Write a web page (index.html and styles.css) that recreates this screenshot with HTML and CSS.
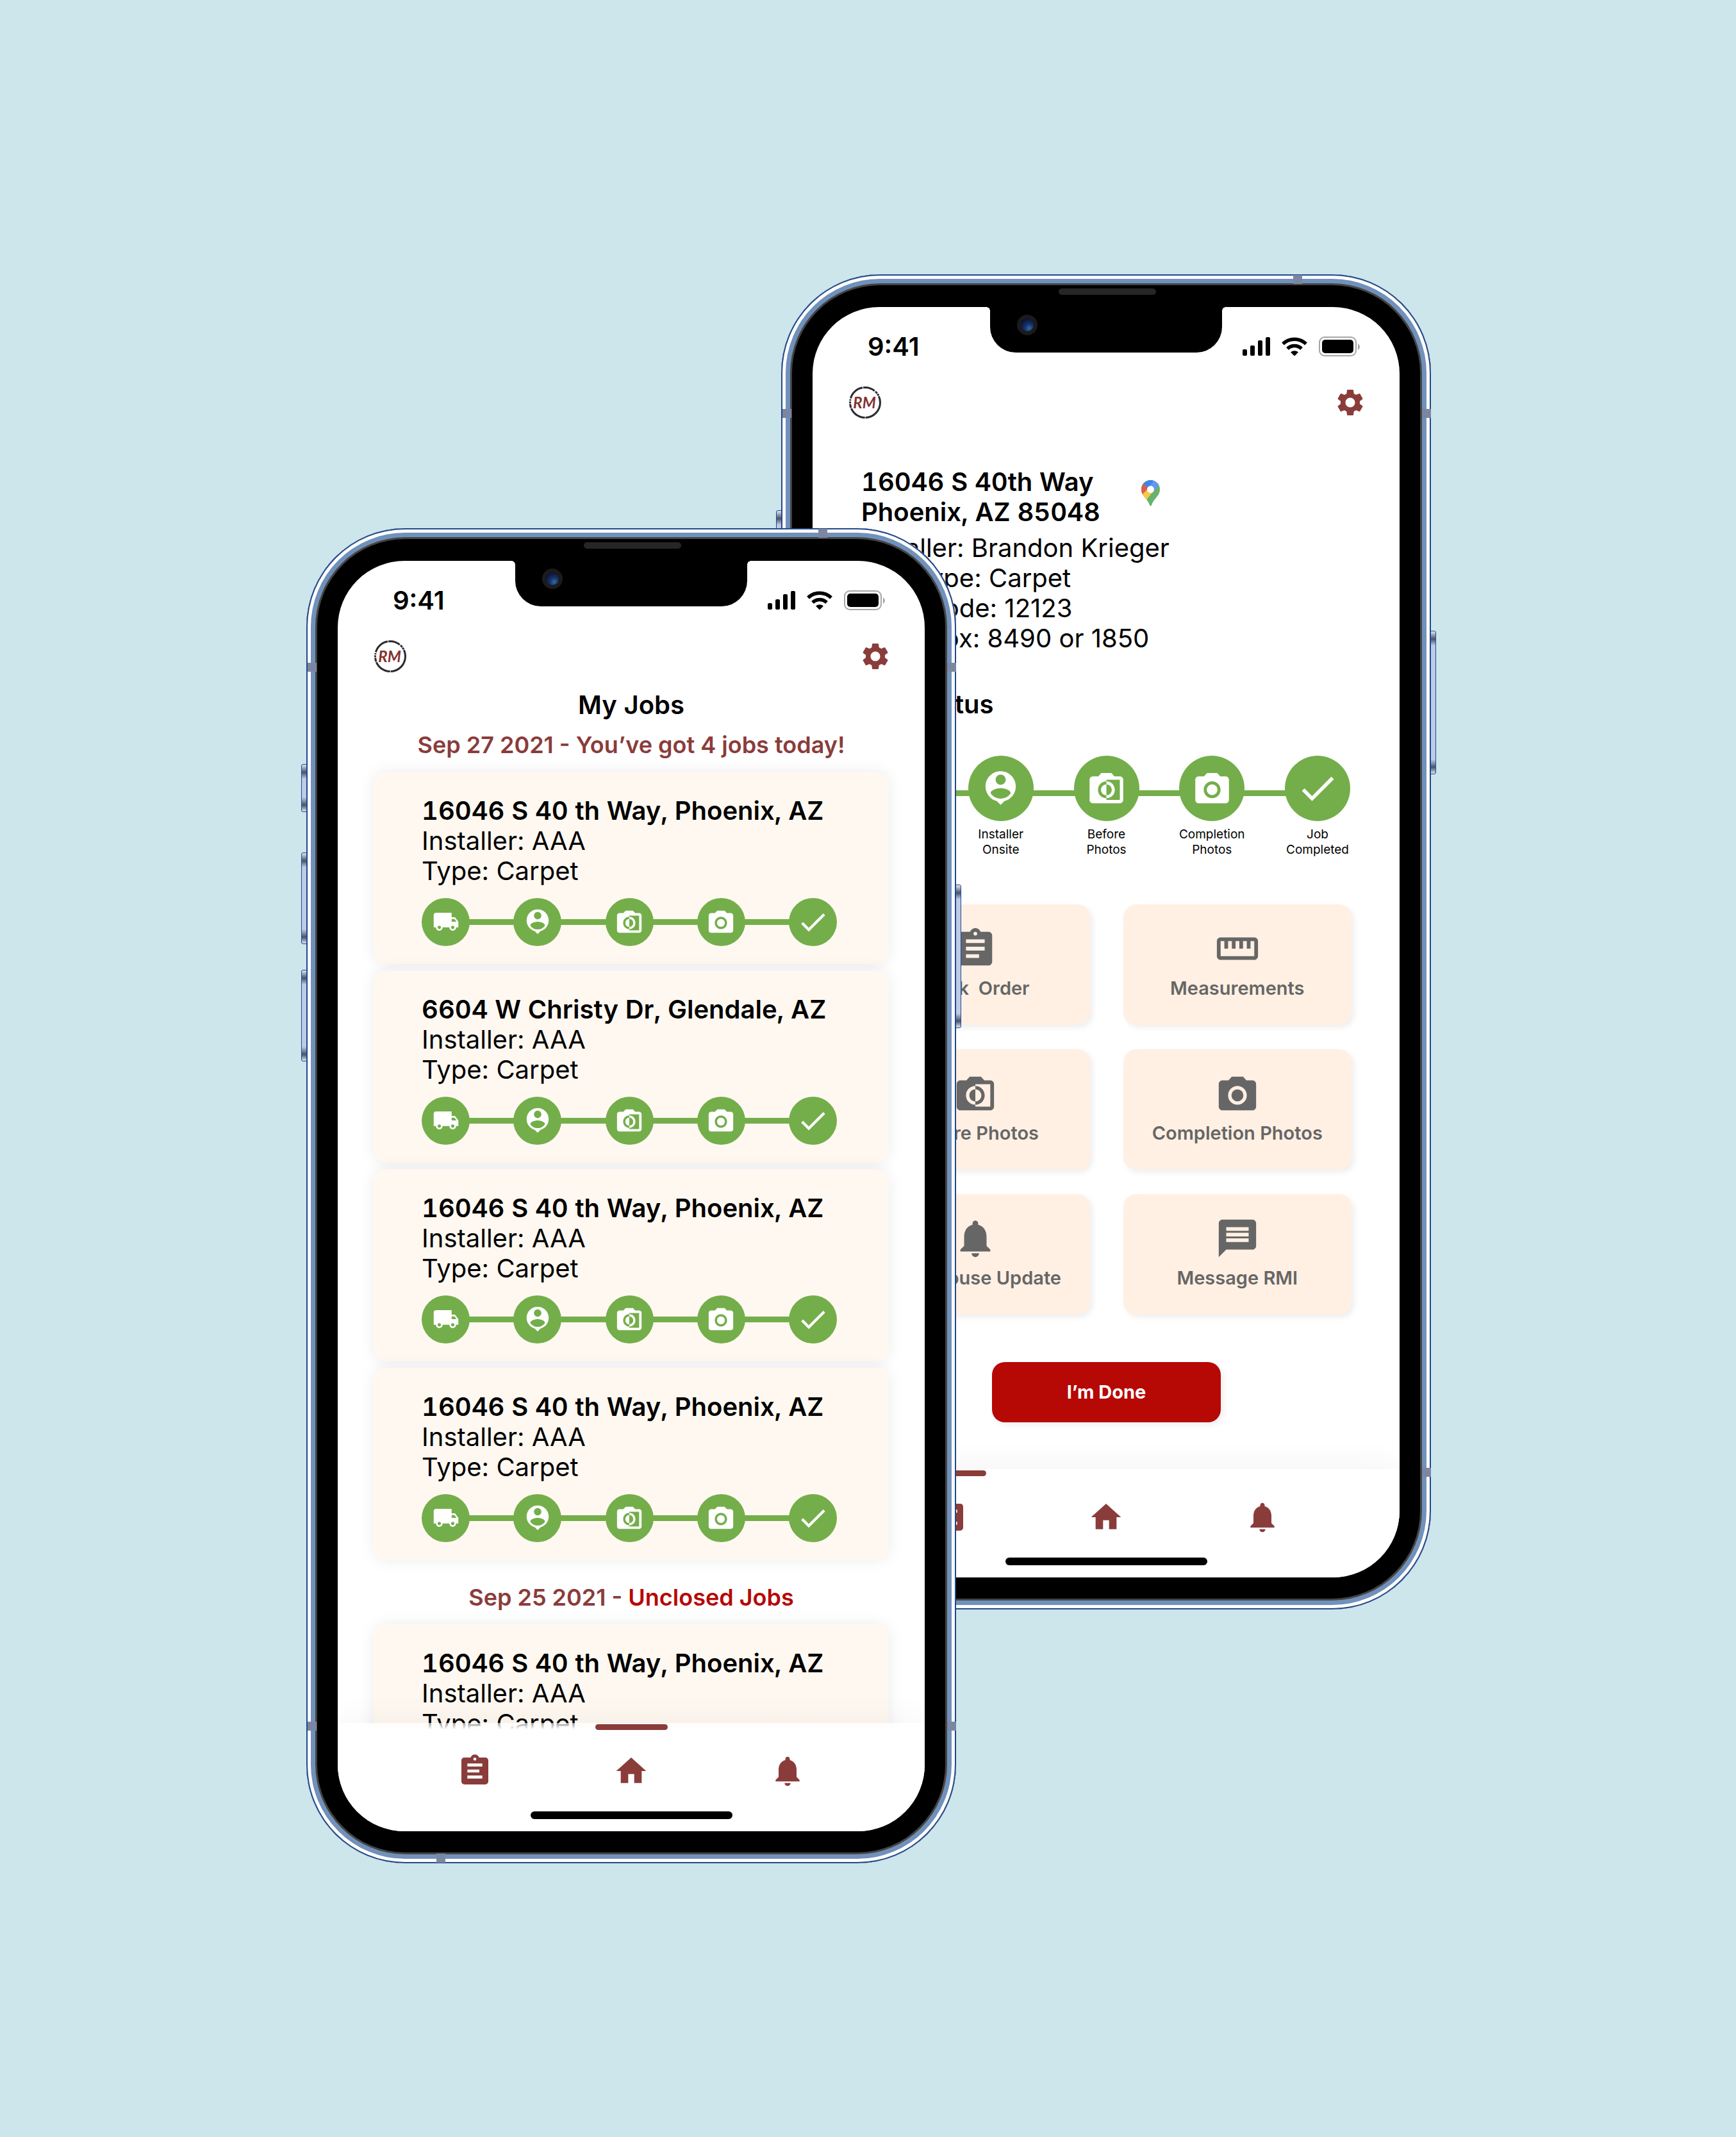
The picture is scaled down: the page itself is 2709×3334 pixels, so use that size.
FILE: index.html
```html
<!DOCTYPE html>
<html lang="en">
<head>
<meta charset="utf-8">
<meta name="viewport" content="width=device-width, initial-scale=1">
<title>RM Installer App</title>
<link rel="stylesheet" href="styles.css">
</head>
<body>
<svg class="sprite" aria-hidden="true">
  <symbol id="truck" viewBox="0 0 24 24"><path d="M20 8h-3V4H3c-1.1 0-2 .9-2 2v11h2c0 1.66 1.34 3 3 3s3-1.34 3-3h6c0 1.66 1.34 3 3 3s3-1.34 3-3h2v-5l-3-4zM6 18.500c-.83 0-1.500-.67-1.500-1.500s.67-1.500 1.500-1.500 1.500.67 1.500 1.500-.67 1.500-1.500 1.500zm13.500-9l1.960 2.500H17V9.500h2.500zm-1.500 9c-.83 0-1.500-.67-1.500-1.500s.67-1.500 1.500-1.500 1.500.67 1.500 1.500-.67 1.500-1.500 1.500z"/></symbol>
  <symbol id="onsite" viewBox="0 0 24 24"><path d="M12 2c-4.970 0-9 4.030-9 9 0 4.170 2.840 7.670 6.690 8.690L12 22l2.310-2.310C18.160 18.670 21 15.170 21 11c0-4.970-4.030-9-9-9zm0 2c1.660 0 3 1.340 3 3s-1.340 3-3 3-3-1.340-3-3 1.340-3 3-3zm0 14.300c-2.500 0-4.710-1.280-6-3.220.03-1.990 4-3.080 6-3.080 1.990 0 5.970 1.090 6 3.080-1.290 1.940-3.500 3.220-6 3.220z"/></symbol>
  <symbol id="before" viewBox="0 0 24 24"><path d="M20 5h-3.200L15 3H9L7.200 5H4c-1.100 0-2 .9-2 2v12c0 1.100.9 2 2 2h16c1.100 0 2-.9 2-2V7c0-1.100-.9-2-2-2zm0 14h-8v-1c-2.800 0-5-2.200-5-5s2.200-5 5-5V7h8v12zm-3-6c0-2.800-2.200-5-5-5v1.800c1.800 0 3.200 1.400 3.200 3.200s-1.400 3.200-3.200 3.200V18c2.800 0 5-2.200 5-5zm-8.200 0c0 1.800 1.400 3.200 3.200 3.200V9.800c-1.800 0-3.200 1.400-3.200 3.200z"/></symbol>
  <symbol id="camera" viewBox="0 -1 24 24"><circle cx="12" cy="12" r="3.200"/><path d="M9 2L7.170 4H4c-1.100 0-2 .9-2 2v12c0 1.100.9 2 2 2h16c1.100 0 2-.9 2-2V6c0-1.100-.9-2-2-2h-3.170L15 2H9zm3 15c-2.760 0-5-2.240-5-5s2.240-5 5-5 5 2.240 5 5-2.240 5-5 5z"/></symbol>
  <symbol id="check" viewBox="0 0 24 24"><path d="M9 16.200L4.800 12l-1.400 1.400L9 19 21 7l-1.400-1.400L9 16.200z"/></symbol>
  <symbol id="order" viewBox="0 0 24 24"><path d="M19 3h-4.180C14.400 1.840 13.300 1 12 1c-1.300 0-2.400.84-2.820 2H5c-1.100 0-2 .9-2 2v14c0 1.100.9 2 2 2h14c1.100 0 2-.9 2-2V5c0-1.100-.9-2-2-2zm-7 0c.55 0 1 .45 1 1s-.45 1-1 1-1-.45-1-1 .45-1 1-1zm2 14H7v-2h7v2zm3-4H7v-2h10v2zm0-4H7V7h10v2z"/></symbol>
  <symbol id="jobs" viewBox="0 0 24 24"><path d="M19 3h-4.180C14.400 1.840 13.300 1 12 1c-1.300 0-2.400.84-2.820 2H5c-1.100 0-2 .9-2 2v14c0 1.100.9 2 2 2h14c1.100 0 2-.9 2-2V5c0-1.100-.9-2-2-2zm-7 0c.55 0 1 .45 1 1s-.45 1-1 1-1-.45-1-1 .45-1 1-1zm5 14H7v-2h10v2zm-2-4H7v-2h8v2zm2-4H7V7h10v2z"/></symbol>
  <symbol id="home" viewBox="0 0 24 24"><path d="M10 20v-6h4v6h5v-8h3L12 3 2 12h3v8z"/></symbol>
  <symbol id="bell" viewBox="0 0 24 24"><path d="M12 22c1.100 0 2-.9 2-2h-4c0 1.100.89 2 2 2zm6-6v-5c0-3.070-1.640-5.640-4.500-6.320V4c0-.83-.67-1.500-1.500-1.500s-1.500.67-1.500 1.500v.68C7.630 5.360 6 7.920 6 11v5l-2 2v1h16v-1l-2-2z"/></symbol>
  <symbol id="ruler" viewBox="0 0 24 24"><path d="M21 6H3c-1.100 0-2 .9-2 2v8c0 1.100.9 2 2 2h18c1.100 0 2-.9 2-2V8c0-1.100-.9-2-2-2zm0 10H3V8h2v4h2V8h2v4h2V8h2v4h2V8h2v4h2V8h2v8z"/></symbol>
  <symbol id="message" viewBox="0 0 24 24"><path d="M20 2H4c-1.100 0-1.990.9-1.990 2L2 22l4-4h14c1.100 0 2-.9 2-2V4c0-1.100-.9-2-2-2zM6 6h12v2H6V6zm0 3h12v2H6V9zm0 3h12v2H6v-2z"/></symbol>
  <symbol id="gear" viewBox="0 0 24 24"><path d="M19.140 12.940c.04-.3.060-.61.060-.94 0-.32-.02-.64-.07-.94l2.030-1.580c.18-.14.23-.41.12-.61l-1.920-3.320c-.12-.22-.37-.29-.59-.22l-2.390.96c-.5-.38-1.030-.7-1.620-.94l-.36-2.540c-.04-.24-.24-.41-.48-.41h-3.840c-.24 0-.43.17-.47.41l-.36 2.540c-.59.24-1.130.57-1.620.94l-2.390-.96c-.22-.08-.47 0-.59.22L2.740 8.870c-.12.21-.08.47.12.61l2.030 1.580c-.05.3-.09.63-.09.94s.02.64.07.94l-2.030 1.580c-.18.14-.23.41-.12.61l1.920 3.320c.12.22.37.29.59.22l2.390-.96c.5.38 1.030.7 1.620.94l.36 2.540c.05.24.24.41.48.41h3.840c.24 0 .44-.17.47-.41l.36-2.540c.59-.24 1.130-.56 1.620-.94l2.390.96c.22.08.47 0 .59-.22l1.920-3.320c.12-.22.07-.47-.12-.61l-2.010-1.580zM12 15.600c-1.980 0-3.600-1.620-3.600-3.600s1.620-3.600 3.600-3.600 3.600 1.620 3.600 3.600-1.620 3.600-3.600 3.600z"/></symbol>
  <symbol id="signal" viewBox="0 0 43 29"><rect y="19" width="7" height="10" rx="2"/><rect x="12" y="13" width="7" height="16" rx="2"/><rect x="24" y="5" width="7" height="24" rx="2"/><rect x="36" width="7" height="29" rx="2"/></symbol>
  <symbol id="wifi" viewBox="0 0 40 29"><g fill="none" stroke="currentColor" stroke-width="5.500"><path d="M2 10.500a26 26 0 0 1 36 0"/><path d="M9 18a16 16 0 0 1 22 0"/></g><path d="M14 23.500a9 9 0 0 1 12 0L20 29.500z"/></symbol>
  <symbol id="battery" viewBox="0 0 64 31"><rect x="1" y="1" width="57" height="29" rx="8" fill="none" stroke="#a6a6a6" stroke-width="2"/><path d="M61 11v10q3-2 3-5t-3-5z" fill="#a6a6a6"/><rect x="5" y="5" width="49" height="21" rx="5"/></symbol>
  <symbol id="logo" viewBox="0 0 50 52"><circle cx="25" cy="26" r="23.500" fill="none" stroke="#2b2b30" stroke-width="3" stroke-dasharray="36 1 27 1 6 1 3 1.500 2 1.500 26 1 19 1.500 4 1 3 1"/><text class="logo-text" x="24" y="35" text-anchor="middle">RM</text></symbol>
  <symbol id="pin" viewBox="0 0 29 41">
    <clipPath id="pin-shape"><path d="M14.500 0C6.500 0 0 6.400 0 14.500c0 5 2 8.500 5 12 4 5 6.500 7.500 8 12.500.5 1.800 2.500 1.800 3 0 1.500-5 4-7.500 8-12.500 3-3.500 5-7 5-12C29 6.400 22.500 0 14.500 0z"/></clipPath>
    <g clip-path="url(#pin-shape)"><path fill="#68b26c" d="M0 0h29v41H0z"/><path fill="#f6c846" d="M0 22l10-10 10 4L7 32H0z"/><path fill="#dd5d4c" d="M0 5h4l8 7L0 24z"/><path fill="#4285e8" d="M2 5l5-5h14L11 13z"/><path fill="#6496f2" d="M20 0h9v6L18 19l-8-6z"/></g>
    <circle cx="14.500" cy="14.500" r="5.500" fill="#fff"/>
  </symbol>
</svg>

<main class="mockup">
  <section class="phone phone-back" aria-label="Job details">
    <span class="key key-mute"></span><span class="key key-up"></span><span class="key key-down"></span><span class="key key-power"></span>
    <span class="band band-top"></span><span class="band band-bottom"></span>
    <span class="band band-left band-high"></span><span class="band band-left band-low"></span>
    <span class="band band-right band-high"></span><span class="band band-right band-low"></span>
    <span class="speaker"></span>
    <div class="screen">
      <div class="notch"><span class="lens"></span></div>
      <div class="status-bar"><span>9:41</span>
        <div class="status-icons"><svg class="signal"><use href="#signal"/></svg><svg class="wifi"><use href="#wifi"/></svg><svg class="battery"><use href="#battery"/></svg></div>
      </div>
      <header class="app-bar"><svg class="logo" role="img" aria-label="RM"><use href="#logo"/></svg><button class="settings" aria-label="Settings"><svg><use href="#gear"/></svg></button></header>
      <div class="details">
        <div class="address"><h1>16046 S 40th Way<br>Phoenix, AZ 85048</h1><a class="map-link" href="#map" aria-label="Open map"><svg><use href="#pin"/></svg></a></div>
        <p class="facts">Installer: Brandon Krieger<br>Job Type: Carpet<br>Gate Code: 12123<br>Lock Box: 8490 or 1850</p>
        <h2>Job Status</h2>
        <ol class="steps steps-large">
          <li><span class="dot"><svg><use href="#truck"/></svg></span><span>Installer<br>En Route</span></li>
          <li><span class="dot"><svg><use href="#onsite"/></svg></span><span>Installer<br>Onsite</span></li>
          <li><span class="dot"><svg><use href="#before"/></svg></span><span>Before<br>Photos</span></li>
          <li><span class="dot"><svg><use href="#camera"/></svg></span><span>Completion<br>Photos</span></li>
          <li><span class="dot dot-check"><svg><use href="#check"/></svg></span><span>Job<br>Completed</span></li>
        </ol>
        <div class="tiles">
          <button class="tile"><svg><use href="#order"/></svg>Work&nbsp; Order</button>
          <button class="tile"><svg><use href="#ruler"/></svg>Measurements</button>
          <button class="tile"><svg><use href="#before"/></svg>Before Photos</button>
          <button class="tile"><svg><use href="#camera"/></svg>Completion Photos</button>
          <button class="tile"><svg><use href="#bell"/></svg>Warehouse Update</button>
          <button class="tile"><svg><use href="#message"/></svg>Message RMI</button>
        </div>
        <button class="done">I’m Done</button>
      </div>
      <nav class="tab-bar">
        <div class="tabs"><a class="active" href="#jobs-list" aria-label="Jobs"><svg><use href="#jobs"/></svg></a><a href="#start" aria-label="Home"><svg><use href="#home"/></svg></a><a href="#alerts" aria-label="Alerts"><svg><use href="#bell"/></svg></a></div>
        <span class="home-indicator"></span>
      </nav>
    </div>
  </section>

  <section class="phone phone-front" aria-label="My jobs">
    <span class="key key-mute"></span><span class="key key-up"></span><span class="key key-down"></span><span class="key key-power"></span>
    <span class="band band-top"></span><span class="band band-bottom"></span>
    <span class="band band-left band-high"></span><span class="band band-left band-low"></span>
    <span class="band band-right band-high"></span><span class="band band-right band-low"></span>
    <span class="speaker"></span>
    <div class="screen">
      <div class="notch"><span class="lens"></span></div>
      <div class="status-bar"><span>9:41</span>
        <div class="status-icons"><svg class="signal"><use href="#signal"/></svg><svg class="wifi"><use href="#wifi"/></svg><svg class="battery"><use href="#battery"/></svg></div>
      </div>
      <header class="app-bar"><svg class="logo" role="img" aria-label="RM"><use href="#logo"/></svg><button class="settings" aria-label="Settings"><svg><use href="#gear"/></svg></button></header>
      <div class="jobs">
        <h1>My Jobs</h1>
        <h2 class="day">Sep 27 2021 - You’ve got 4 jobs today!</h2>
        <div class="cards">
          <article class="card"><h3>16046 S 40 th Way, Phoenix, AZ</h3><p>Installer: AAA<br>Type: Carpet</p>
            <ol class="steps"><li class="dot"><svg class="truck"><use href="#truck"/></svg></li><li class="dot"><svg><use href="#onsite"/></svg></li><li class="dot"><svg><use href="#before"/></svg></li><li class="dot"><svg><use href="#camera"/></svg></li><li class="dot dot-check"><svg><use href="#check"/></svg></li></ol></article>
          <article class="card"><h3>6604 W Christy Dr, Glendale, AZ</h3><p>Installer: AAA<br>Type: Carpet</p>
            <ol class="steps"><li class="dot"><svg class="truck"><use href="#truck"/></svg></li><li class="dot"><svg><use href="#onsite"/></svg></li><li class="dot"><svg><use href="#before"/></svg></li><li class="dot"><svg><use href="#camera"/></svg></li><li class="dot dot-check"><svg><use href="#check"/></svg></li></ol></article>
          <article class="card"><h3>16046 S 40 th Way, Phoenix, AZ</h3><p>Installer: AAA<br>Type: Carpet</p>
            <ol class="steps"><li class="dot"><svg class="truck"><use href="#truck"/></svg></li><li class="dot"><svg><use href="#onsite"/></svg></li><li class="dot"><svg><use href="#before"/></svg></li><li class="dot"><svg><use href="#camera"/></svg></li><li class="dot dot-check"><svg><use href="#check"/></svg></li></ol></article>
          <article class="card"><h3>16046 S 40 th Way, Phoenix, AZ</h3><p>Installer: AAA<br>Type: Carpet</p>
            <ol class="steps"><li class="dot"><svg class="truck"><use href="#truck"/></svg></li><li class="dot"><svg><use href="#onsite"/></svg></li><li class="dot"><svg><use href="#before"/></svg></li><li class="dot"><svg><use href="#camera"/></svg></li><li class="dot dot-check"><svg><use href="#check"/></svg></li></ol></article>
        </div>
        <h2 class="day day-unclosed">Sep 25 2021 - <em>Unclosed Jobs</em></h2>
        <div class="cards">
          <article class="card"><h3>16046 S 40 th Way, Phoenix, AZ</h3><p>Installer: AAA<br>Type: Carpet</p></article>
        </div>
      </div>
      <nav class="tab-bar">
        <div class="tabs"><a href="#jobs-list" aria-label="Jobs"><svg><use href="#jobs"/></svg></a><a class="active" href="#start" aria-label="Home"><svg><use href="#home"/></svg></a><a href="#alerts" aria-label="Alerts"><svg><use href="#bell"/></svg></a></div>
        <span class="home-indicator"></span>
      </nav>
    </div>
  </section>
</main>
</body>
</html>
```

FILE: styles.css
```css
:root {
  --maroon: #8a3c3b;
  --red: #b60805;
  --green: #74ae4a;
  --rim: #7091bb;
  --navy: #23488a;
}

* { box-sizing: border-box; }

body {
  margin: 0;
  min-height: 100vh;
  padding-left: 2px;
  display: flex;
  align-items: center;
  justify-content: center;
  background: #cce6ec;
  color: #000;
  font: 400 40px/47px Inter, "Liberation Sans", sans-serif;
}

h1, h2, h3, p, ol { margin: 0; padding: 0; }
h1, h2, h3 { font-size: 40px; font-weight: 600; }
h1, h3 { font-variant-numeric: tabular-nums; }
ol { list-style: none; }
button { border: 0; padding: 0; background: none; font: inherit; color: inherit; cursor: pointer; }
a { color: inherit; }
svg { display: block; fill: currentColor; }
.sprite { position: absolute; width: 0; height: 0; }

/* Two overlapping devices share the middle column */
.mockup {
  width: 100%;
  max-width: 1755px;
  display: grid;
  grid-template-columns: 741fr 273fr 741fr;
}

.phone {
  position: relative;
  grid-row: 1;
  min-width: 0;
  padding: 51px 49px 50px;
  display: flex;
  border-radius: 154px;
  background: #000;
  box-shadow: inset 0 0 0 2px var(--navy), inset 0 0 0 7px #fff, inset 0 0 0 14px var(--rim), inset 0 0 0 17px #444;
}
.phone-back { grid-column: 2 / 4; aspect-ratio: 1014 / 2083; align-self: start; }
.phone-front { grid-column: 1 / 3; aspect-ratio: 1014 / 2083; margin-top: 396px; }

/* Hardware details on the rim */
.key {
  position: absolute;
  left: -8px;
  width: 9px;
  border: 1px solid var(--navy);
  border-radius: 3px 0 0 3px;
  background: linear-gradient(#dfe6f4, #46536b 12px, #bccbe8 22px, #bccbe8 calc(100% - 22px), #46536b calc(100% - 10px), #dfe6f4);
}
.key-mute { top: 368px; height: 75px; }
.key-up { top: 506px; height: 143px; }
.key-down { top: 689px; height: 143px; }
.key-power { top: 556px; height: 224px; left: auto; right: -8px; border-radius: 0 3px 3px 0; }
.band { position: absolute; width: 14px; height: 14px; background: #7b86a3; }
.band-top { top: 1px; right: 201px; }
.band-bottom { bottom: 1px; left: 203px; }
.band-left { left: 2px; }
.band-right { right: 0; }
.band-high { top: 210px; }
.band-low { bottom: 207px; }
.speaker { position: absolute; top: 22px; left: 50%; width: 152px; height: 10px; margin-left: -74px; border-radius: 5px; background: #262626; }

.screen {
  position: relative;
  flex: 1;
  min-width: 0;
  display: flex;
  flex-direction: column;
  overflow: hidden;
  border-radius: 104px;
  background: #fff;
}
.notch { position: absolute; top: 0; left: 50%; width: 362px; height: 71px; margin-left: -181px; border-radius: 0 0 40px 40px; background: #000; }
.notch::before, .notch::after { content: ""; position: absolute; top: 0; width: 6px; height: 6px; }
.notch::before { right: 100%; background: radial-gradient(circle at 0 100%, transparent 6px, #000 6px); }
.notch::after { left: 100%; background: radial-gradient(circle at 100% 100%, transparent 6px, #000 6px); }
.lens { position: absolute; top: 12px; left: 42px; width: 32px; height: 32px; border: 6px solid #1b1b1b; border-radius: 50%; background: radial-gradient(circle at 65% 75%, #2a6f9f, #182f68 35%, #0b1436 75%); }

.status-bar { height: 124px; padding: 0 62px 0 86px; display: flex; align-items: center; justify-content: space-between; font-weight: 600; }
.status-icons { display: flex; align-items: center; gap: 18px; }
.signal { width: 43px; height: 29px; }
.wifi { width: 40px; height: 29px; }
.battery { width: 64px; height: 31px; }

.app-bar { height: 50px; padding: 0 52px 0 57px; display: flex; align-items: center; justify-content: space-between; }
.logo { width: 50px; height: 52px; }
.logo-text { font: italic 700 24px Lato, "Liberation Sans", sans-serif; fill: #83322f; }
.settings { color: var(--maroon); }
.settings svg { width: 50px; height: 50px; }

/* Job list; its last 10px run under the fading top of the tab bar */
.jobs { flex: 1; min-height: 0; margin-bottom: -10px; padding: 27px 56px 0; overflow: hidden; text-align: center; }
.day { margin: 17px 0 20px; font-size: 36px; line-height: 44px; color: var(--maroon); }
.day-unclosed { margin-top: 36px; }
.day em { font-style: normal; color: var(--red); }
.cards { display: grid; gap: 10px; text-align: left; }
.card { min-height: 300px; padding: 37px 81px 28px 75px; border-radius: 20px; background: #fff8f1; box-shadow: 0 0 25px rgba(0, 0, 0, .08); }

/* Progress steps */
.steps { margin-top: 19px; display: flex; justify-content: space-between; background: linear-gradient(var(--green), var(--green)) 50% 50% / calc(100% - 40px) 9px no-repeat; }
.dot { width: 75px; height: 75px; display: grid; place-items: center; border-radius: 50%; background: var(--green); color: #fff; }
.dot svg { width: 46px; height: 46px; }
.dot .truck { width: 42px; height: 42px; }
.dot-check svg { width: 51px; height: 51px; }
.steps-large { margin: 57px 2px 0; background-position: 50% 54px; font-size: 19px; line-height: 24px; text-align: center; }
.steps-large li { width: 102px; display: flex; flex-direction: column; align-items: center; gap: 9px; white-space: nowrap; }
.steps-large .dot { width: 102px; height: 102px; }
.steps-large .dot svg { width: 63px; height: 63px; }
.steps-large .dot-check svg { width: 68px; height: 68px; }

/* Job details */
.details { flex: 1; padding: 75px 75px 0 76px; display: flex; flex-direction: column; }
.address { display: flex; gap: 64px; }
.map-link { padding-top: 21px; }
.map-link svg { width: 29px; height: 41px; }
.facts { margin: 9px 0 56px; }
.tiles { margin-top: 73px; display: grid; grid-template-columns: 1fr 1fr; gap: 38px 52px; }
.tile, .done { border-radius: 20px; font-size: 29px; line-height: 34px; font-weight: 600; box-shadow: 4px 4px 10px rgba(0, 0, 0, .07); }
.tile { height: 188px; padding-bottom: 6px; display: flex; flex-direction: column; align-items: center; justify-content: center; gap: 10px; background: #fff0e3; color: #666; }
.tile svg { width: 70px; height: 70px; }
.done { width: 357px; height: 94px; margin-top: 74px; align-self: center; background: var(--red); color: #fff; font-weight: 700; }

/* Bottom navigation */
.tab-bar {
  position: relative;
  height: 169px;
  display: flex;
  flex-direction: column;
  align-items: center;
  justify-content: space-between;
  padding-bottom: 19px;
  background: linear-gradient(rgba(255, 255, 255, .6), #fff 10px);
  box-shadow: 0 0 50px rgba(0, 0, 0, .06);
  color: var(--maroon);
}
.tabs { display: flex; gap: 131px; }
.tabs a { width: 113px; display: grid; justify-items: center; }
.tabs a::before { content: ""; width: 100%; height: 9px; margin: 2px 0 36px; border-radius: 5px; }
.tabs .active::before { background: currentColor; }
.tabs svg { width: 56px; height: 56px; }
.home-indicator { width: 315px; height: 12px; border-radius: 6px; background: #000; }
```
